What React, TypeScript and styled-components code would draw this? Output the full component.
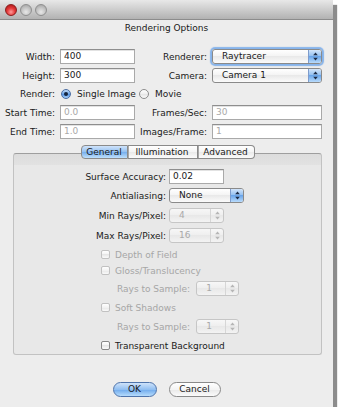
import React from 'react';
import styled, { createGlobalStyle, css } from 'styled-components';

const Global = createGlobalStyle`
  html, body { margin: 0; padding: 0; background: #ffffff; }
  body {
    font-family: "DejaVu Sans", "Liberation Sans", sans-serif;
    font-size: 9px;
    color: #1a1a1a;
  }
`;

const Window = styled.div`
  width: 333px;
  height: 407px;
  background: #ededed;
  box-shadow: 4px 5px 1px rgba(0, 0, 0, 0.45);
  display: flex;
  flex-direction: column;
`;

const TitleBar = styled.div`
  height: 20px;
  flex: none;
  box-sizing: border-box;
  display: flex;
  align-items: center;
  gap: 3px;
  padding-left: 5px;
  background: linear-gradient(#e8e8e8, #b2b2b2);
  border-bottom: 1px solid #8c8c8c;
`;

const Light = styled.span<{ $red?: boolean }>`
  width: 12px;
  height: 12px;
  border-radius: 50%;
  box-sizing: border-box;
  ${p => p.$red
    ? css`
      background: radial-gradient(circle at 50% 70%, #ff9a9a 0, #e43a3a 45%, #a30f0f 100%);
      border: 1px solid #8a1d1d;
    `
    : css`
      background: radial-gradient(circle at 50% 70%, #e8e8e8 0, #c4c4c4 50%, #9c9c9c 100%);
      border: 1px solid #8f8f8f;
    `}
`;

const Heading = styled.div`
  margin-top: 1px;
  height: 14px;
  line-height: 14px;
  text-align: center;
`;

const TopForm = styled.div`
  margin-top: 14px;
  display: grid;
  grid-template-columns: 55px 75px 67px 110px;
  grid-template-rows: 15px 15px 14px 15px 15px;
  column-gap: 5px;
  row-gap: 4px;
`;

const Label = styled.div<{ $muted?: boolean }>`
  display: flex;
  align-items: center;
  justify-content: flex-end;
  white-space: nowrap;
  color: ${p => (p.$muted ? '#a6a6a6' : '#1a1a1a')};
`;

const Field = styled.div<{ $w?: number; $dim?: boolean }>`
  box-sizing: border-box;
  width: ${p => (p.$w ? `${p.$w}px` : 'auto')};
  height: 15px;
  line-height: 13px;
  padding-left: 3px;
  background: #fff;
  border: 1px solid #a9a9a9;
  border-top-color: #8e8e8e;
  box-shadow: inset 0 1px 0 #e2e2e2;
  color: ${p => (p.$dim ? '#a9a9a9' : '#1a1a1a')};
`;

const Popup = styled.div<{ $w: number; $off?: boolean; $focus?: boolean }>`
  box-sizing: border-box;
  width: ${p => p.$w}px;
  height: 15px;
  display: flex;
  align-items: stretch;
  border-radius: 3px;
  border: 1px solid ${p => (p.$off ? '#c6c6c6' : '#8a8a8a')};
  background: ${p => p.$off
    ? 'linear-gradient(#f7f7f7, #eeeeee 50%, #e8e8e8 50%, #f3f3f3)'
    : 'linear-gradient(#ffffff, #f3f3f3 50%, #e9e9e9 50%, #fbfbfb)'};
  color: ${p => (p.$off ? '#a9a9a9' : '#1a1a1a')};
  ${p => p.$focus && css`box-shadow: 0 0 1px 2px #86b3ea;`}
`;

const PopupText = styled.span`
  flex: 1;
  padding-left: 9px;
  line-height: 13px;
  white-space: nowrap;
  overflow: hidden;
`;

const Cap = styled.span<{ $off?: boolean }>`
  width: 12px;
  display: flex;
  align-items: center;
  justify-content: center;
  border-left: 1px solid ${p => (p.$off ? '#d6d6d6' : '#7e9ccc')};
  border-radius: 0 2px 2px 0;
  background: ${p => p.$off
    ? 'transparent'
    : 'linear-gradient(#d3e5fa, #8fbdf0 50%, #6aa5ea 50%, #b9dbfb)'};
`;

const Arrows = ({ color }: { color: string }) => (
  <svg width="5" height="9" viewBox="0 0 5 9">
    <path d="M2.5 0.5 L4.8 3.3 L0.2 3.3 Z" fill={color} />
    <path d="M2.5 8.5 L4.8 5.7 L0.2 5.7 Z" fill={color} />
  </svg>
);

const Select = ({ w, text, off, focus }: { w: number; text: string; off?: boolean; focus?: boolean }) => (
  <Popup $w={w} $off={off} $focus={focus}>
    <PopupText>{text}</PopupText>
    <Cap $off={off}>
      <Arrows color={off ? '#b5b5b5' : '#1c2a44'} />
    </Cap>
  </Popup>
);

const RadioGroup = styled.div`
  grid-column: 2 / 5;
  display: flex;
  align-items: center;
  padding-left: 1px;
`;

const RadioItem = styled.label`
  width: 78px;
  display: flex;
  align-items: center;
  gap: 6px;
  white-space: nowrap;
`;

const RadioDot = styled.span<{ $on?: boolean }>`
  width: 10px;
  height: 10px;
  box-sizing: border-box;
  border-radius: 50%;
  display: flex;
  align-items: center;
  justify-content: center;
  ${p => p.$on
    ? css`
      border: 1px solid #4a6da3;
      background: linear-gradient(#c2dbf7, #6ea7ea 50%, #4f8fe0 50%, #a9d2fa);
      &::after { content: ''; width: 4px; height: 4px; border-radius: 50%; background: #15243d; }
    `
    : css`
      border: 1px solid #8c8c8c;
      background: linear-gradient(#ffffff, #efefef 50%, #e4e4e4 50%, #fafafa);
    `}
`;

const TabsRow = styled.div`
  margin: 6px 0 -6px;
  height: 14px;
  display: flex;
  justify-content: center;
  padding-left: 2px;
  position: relative;
  z-index: 1;
`;

const Tab = styled.div<{ $w: number; $on?: boolean; $first?: boolean; $last?: boolean }>`
  box-sizing: border-box;
  width: ${p => p.$w}px;
  height: 14px;
  line-height: 12px;
  text-align: center;
  border: 1px solid #8a8a8a;
  border-left-width: ${p => (p.$first ? 1 : 0)}px;
  border-radius: ${p => (p.$first ? '4px 0 0 4px' : p.$last ? '0 4px 4px 0' : '0')};
  background: ${p => p.$on
    ? 'linear-gradient(#cfe3fa, #93c0f1 50%, #74adee 50%, #bfe0fc)'
    : 'linear-gradient(#ffffff, #f4f4f4 50%, #e9e9e9 50%, #fbfbfb)'};
  ${p => !p.$first && css`box-shadow: inset 1px 0 0 #a8a8a8;`}
`;

const Panel = styled.div`
  margin: 0 11px 0 13px;
  height: 202px;
  box-sizing: border-box;
  border: 1px solid #c2c2c2;
  border-top-color: #9e9e9e;
  border-radius: 3px;
  background: linear-gradient(#dcdcdc, #e2e2e2 11px, #e8e8e8 11px);
  padding-top: 15px;
  display: flex;
  flex-direction: column;
`;

const PanelRow = styled.div<{ $mt?: number }>`
  height: 15px;
  margin-top: ${p => p.$mt ?? 0}px;
  display: grid;
  grid-template-columns: 152px auto;
  column-gap: 3px;
  align-items: center;
`;

const CheckRow = styled.label<{ $mt: number; $muted?: boolean }>`
  height: 15px;
  margin-top: ${p => p.$mt}px;
  padding-left: 87px;
  display: flex;
  align-items: center;
  gap: 5px;
  color: ${p => (p.$muted ? '#a6a6a6' : '#1a1a1a')};
`;

const Box = styled.span<{ $muted?: boolean }>`
  width: 9px;
  height: 9px;
  box-sizing: border-box;
  border-radius: 2px;
  border: 1px solid ${p => (p.$muted ? '#c1c1c1' : '#888888')};
  background: linear-gradient(#ffffff, #f2f2f2 50%, #e6e6e6 50%, #fafafa);
`;

const SubRow = styled.div<{ $mt: number }>`
  height: 15px;
  margin-top: ${p => p.$mt}px;
  padding-left: 103px;
  display: flex;
  align-items: center;
  gap: 6px;
  color: #a6a6a6;
`;

const Buttons = styled.div`
  margin-top: 27px;
  display: flex;
  justify-content: center;
  gap: 12px;
`;

const Button = styled.button<{ $w: number; $primary?: boolean }>`
  width: ${p => p.$w}px;
  height: 15px;
  padding: 0;
  font: inherit;
  color: #1a1a1a;
  line-height: 13px;
  border-radius: 8px;
  ${p => p.$primary
    ? css`
      border: 1px solid #4f74ab;
      background: linear-gradient(#cfe3fa, #91bff1 50%, #6ea9ec 50%, #b6dcfc);
    `
    : css`
      border: 1px solid #8a8a8a;
      background: linear-gradient(#ffffff, #f4f4f4 50%, #e8e8e8 50%, #fbfbfb);
    `}
`;

export default function App() {
  return (
    <>
      <Global />
      <Window>
        <TitleBar>
          <Light $red />
          <Light />
          <Light />
        </TitleBar>
        <Heading>Rendering Options</Heading>

        <TopForm>
          <Label>Width:</Label>
          <Field>400</Field>
          <Label>Renderer:</Label>
          <Select w={110} text="Raytracer" focus />

          <Label>Height:</Label>
          <Field>300</Field>
          <Label>Camera:</Label>
          <Select w={110} text="Camera 1" />

          <Label>Render:</Label>
          <RadioGroup>
            <RadioItem><RadioDot $on />Single Image</RadioItem>
            <RadioItem><RadioDot />Movie</RadioItem>
          </RadioGroup>

          <Label>Start Time:</Label>
          <Field $dim>0.0</Field>
          <Label>Frames/Sec:</Label>
          <Field $dim>30</Field>

          <Label>End Time:</Label>
          <Field $dim>1.0</Field>
          <Label>Images/Frame:</Label>
          <Field $dim>1</Field>
        </TopForm>

        <TabsRow>
          <Tab $w={47} $on $first>General</Tab>
          <Tab $w={70}>Illumination</Tab>
          <Tab $w={57} $last>Advanced</Tab>
        </TabsRow>

        <Panel>
          <PanelRow>
            <Label>Surface Accuracy:</Label>
            <Field $w={55}>0.02</Field>
          </PanelRow>
          <PanelRow $mt={4}>
            <Label>Antialiasing:</Label>
            <Select w={75} text="None" />
          </PanelRow>
          <PanelRow $mt={5}>
            <Label>Min Rays/Pixel:</Label>
            <Select w={55} text="4" off />
          </PanelRow>
          <PanelRow $mt={5}>
            <Label>Max Rays/Pixel:</Label>
            <Select w={55} text="16" off />
          </PanelRow>

          <CheckRow $mt={4} $muted><Box $muted />Depth of Field</CheckRow>
          <CheckRow $mt={1} $muted><Box $muted />Gloss/Translucency</CheckRow>
          <SubRow $mt={3}>
            Rays to Sample:
            <Select w={43} text="1" off />
          </SubRow>
          <CheckRow $mt={4} $muted><Box $muted />Soft Shadows</CheckRow>
          <SubRow $mt={4}>
            Rays to Sample:
            <Select w={43} text="1" off />
          </SubRow>
          <CheckRow $mt={4}><Box />Transparent Background</CheckRow>
        </Panel>

        <Buttons>
          <Button $w={44} $primary>OK</Button>
          <Button $w={52}>Cancel</Button>
        </Buttons>
      </Window>
    </>
  );
}
